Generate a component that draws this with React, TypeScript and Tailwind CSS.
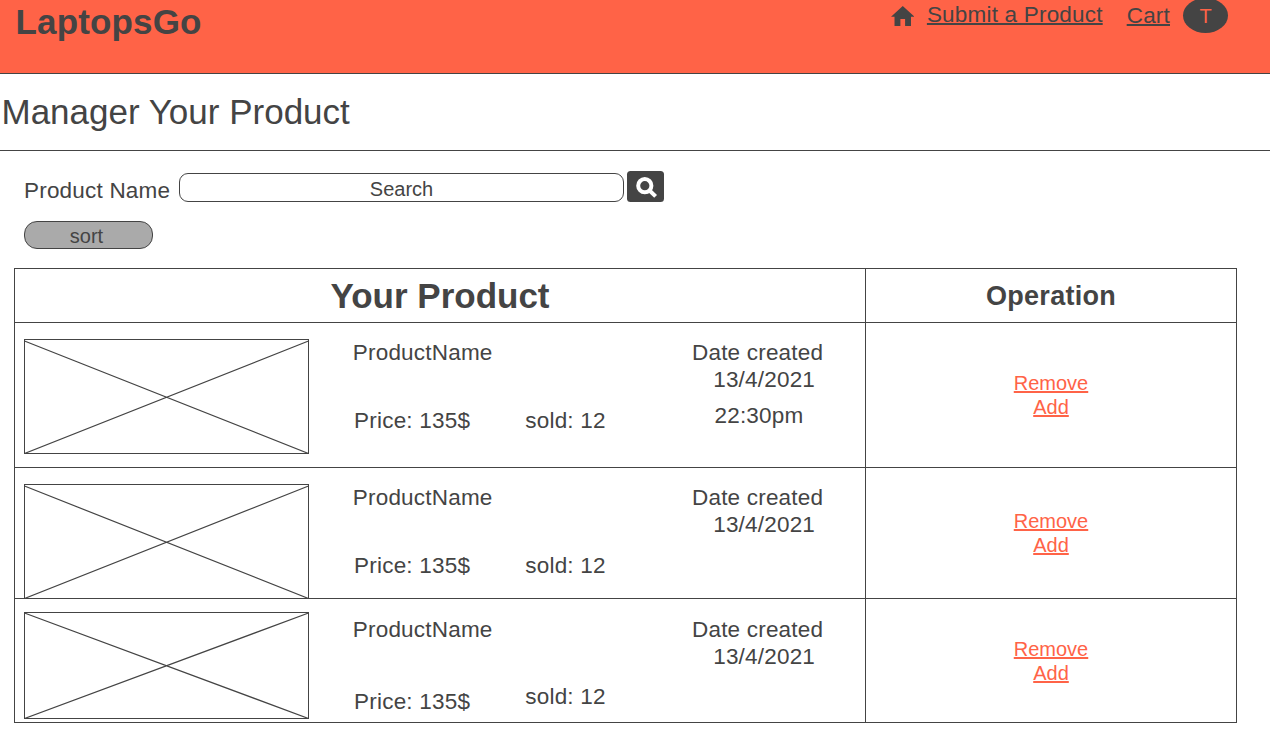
import React from "react";

type Product = {
  name: string;
  price: string;
  sold: string;
  date: string;
  time?: string;
  row: string;
  image: string;
  imageHeight: number;
  inset: number;
  details: string;
  priceGap: string;
  soldGap: string;
};

const products: Product[] = [
  {
    name: "ProductName", price: "135$", sold: "12", date: "13/4/2021", time: "22:30pm",
    row: "h-[144px]", image: "mt-4 h-[115px]", imageHeight: 115, inset: 2,
    details: "pt-4", priceGap: "mt-[41px]", soldGap: "mt-[41px]",
  },
  {
    name: "ProductName", price: "135$", sold: "12", date: "13/4/2021",
    row: "h-[130px]", image: "mt-4 h-[115px]", imageHeight: 115, inset: 2,
    details: "pt-4", priceGap: "mt-[41px]", soldGap: "mt-[41px]",
  },
  {
    name: "ProductName", price: "135$", sold: "12", date: "13/4/2021",
    row: "h-[123px]", image: "mt-[13px] h-[107px]", imageHeight: 107, inset: 1,
    details: "pt-[17px]", priceGap: "mt-[45px]", soldGap: "mt-[40px]",
  },
];

function Placeholder({ className, height, inset }: { className: string; height: number; inset: number }) {
  return (
    <div className={`${className} w-[285px] shrink-0 border border-[#444]`}>
      <svg className="-m-px block" width="285" height={height} fill="none" stroke="#444" strokeWidth="1.2">
        <path d={`M0.5 ${inset}L284.5 ${height - 0.5}M284.5 ${inset}L0.5 ${height - 0.5}`} />
      </svg>
    </div>
  );
}

function ProductRow({ p }: { p: Product }) {
  return (
    <div className={`${p.row} flex border-t border-[#444] box-content`}>
      <div className="flex w-[850px] shrink-0 items-start pl-[9px] text-[22.5px] leading-[27px] tracking-[0.2px]">
        <Placeholder className={p.image} height={p.imageHeight} inset={p.inset} />
        <div className={`${p.details} ml-[43.8px] w-[339.2px] shrink-0`}>
          <div>{p.name}</div>
          <div className="flex items-start">
            <div className={`${p.priceGap} w-[172.5px] pl-[1.3px]`}>Price: {p.price}</div>
            <div className={p.soldGap}>sold: {p.sold}</div>
          </div>
        </div>
        <div className={`${p.details} whitespace-nowrap`}>
          <div>Date created</div>
          <div className="pl-[21.2px]">{p.date}</div>
          {p.time && <div className="mt-[9px] pl-[22.5px]">{p.time}</div>}
        </div>
      </div>
      <div className="flex flex-1 flex-col items-center justify-center border-l border-[#444] text-xl leading-6 text-[#ff6347]">
        <a className="underline decoration-2 underline-offset-1">Remove</a>
        <a className="underline decoration-2 underline-offset-1">Add</a>
      </div>
    </div>
  );
}

export default function App() {
  return (
    <div className="h-[740px] w-[1270px] overflow-hidden bg-white font-['Liberation_Sans',Arial,sans-serif] text-[#444]">
      <header className="flex h-[74px] items-start justify-between border-b border-[#444] bg-[#ff6347] pl-[15.5px] pr-[42px]">
        <h1 className="pt-[2px] text-[35px] font-bold leading-[40px] tracking-[0.15px]">LaptopsGo</h1>
        <nav className="flex items-start text-[22.5px] leading-[26px]">
          <svg className="mr-[12.5px] mt-[5.8px] h-[20.2px] w-[23.5px]" viewBox="2 3 20 17" preserveAspectRatio="none" fill="#444">
            <path d="M10 20v-6h4v6h5v-8h3L12 3 2 12h3v8z" />
          </svg>
          <a className="mr-6 mt-[2px] tracking-[0.2px] underline decoration-2 underline-offset-1">Submit a Product</a>
          <a className="mr-[13px] mt-[3px] tracking-[0.2px] underline decoration-2 underline-offset-1">Cart</a>
          <div className="-mt-[2px] flex h-[35px] w-[45px] justify-center rounded-[50%] bg-[#444] pt-[5px] text-xl leading-[26px] text-[#ff6347]">T</div>
        </nav>
      </header>
      <h2 className="h-[77px] border-b border-[#444] pl-[1.5px] pt-[18px] text-[35px] leading-[40px]">Manager Your Product</h2>
      <section className="h-[117px] pl-6 pt-5">
        <div className="flex h-[31px] items-start">
          <label className="mt-[6px] w-[155px] text-[22.5px] leading-[27px] tracking-[0.2px]">Product Name</label>
          <div className="mt-[2px] flex h-[29px] w-[445px] justify-center rounded-[9px] border border-[#444] pt-[3px] text-xl leading-6">Search</div>
          <button className="ml-[3px] flex h-[30.5px] w-[37.3px] justify-center rounded-[3.5px] bg-[#444] pl-[1px] pt-[6px]">
            <svg className="h-[21px] w-[21px]" viewBox="0 0 21 21" fill="none" stroke="white" strokeWidth="4">
              <circle cx="8.8" cy="8.7" r="6.6" />
              <path d="M13 13L19.6 19.4" />
            </svg>
          </button>
        </div>
        <button className="mt-[19px] flex h-7 w-[129px] -translate-y-0 justify-center rounded-[13px] border border-[#444] bg-[#aaa] pr-[4px] pt-[2px] text-xl leading-6">sort</button>
      </section>
      <main className="ml-[14px] w-[1223px] border border-[#444]">
        <div className="flex h-[53px] font-bold">
          <div className="w-[850px] pt-[7px] text-center text-[35px] leading-[40px]">Your Product</div>
          <div className="flex-1 border-l border-[#444] pt-[11px] text-center text-[27px] leading-[32px] tracking-[0.25px]">Operation</div>
        </div>
        {products.map((p, i) => <ProductRow key={i} p={p} />)}
      </main>
    </div>
  );
}
